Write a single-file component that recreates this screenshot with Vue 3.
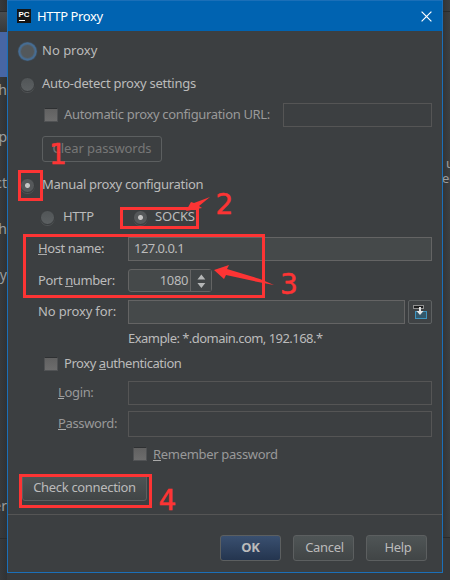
<script setup>
const marks = [
  { n: '1', x: 49, y: 163.5 },
  { n: '2', x: 215.5, y: 213.5 },
  { n: '3', x: 280, y: 293.5 },
  { n: '4', x: 158.5, y: 509.5 },
]
</script>

<template>
  <div class="screen">
    <div class="behind-left">
      <i class="strip"></i><i class="tool"></i><i class="selected"></i>
      <span class="b1">Ch</span><span class="b2">p</span><span class="b3">ct</span><span class="b4">h</span><span class="b5">Py</span><span class="b6">er</span>
      <i class="rule"></i>
    </div>
    <section class="dialog">
      <header class="title">
        <svg class="logo" width="14" height="14" viewBox="0 0 14 14">
          <rect width="14" height="14" fill="#151515" />
          <text x="1.500" y="7.500" font-size="8" font-weight="700" font-family="Liberation Sans, sans-serif" fill="#fff" textLength="11">PC</text>
          <rect x="2" y="11" width="6" height="1" fill="#fff" />
        </svg>
        <span class="t-title">HTTP Proxy</span>
        <svg class="close" width="11" height="11" viewBox="0 0 11 11"><path d="M.6.6 10.4 10.4M10.4.6.6 10.4" stroke="#fff" stroke-width="1.2" /></svg>
      </header>

      <div class="row r-none"><i class="radio focus"></i><span class="t-none">No proxy</span></div>
      <div class="row r-auto"><i class="radio"></i><span class="t-auto">Auto-detect proxy settings</span></div>
      <div class="row r-url"><i class="check"></i><span class="t-url">Automatic proxy configuration URL:</span><i class="field off"></i></div>
      <div class="row r-clear"><button class="btn ghost"><span class="t-clear">Clear passwords</span></button></div>
      <div class="row r-manual"><i class="radio on"></i><span class="t-manual">Manual proxy configuration</span></div>
      <div class="row r-types">
        <i class="radio"></i><span class="t-http">HTTP</span>
        <i class="radio on"></i><span class="t-socks">SOCKS</span>
      </div>
      <div class="row r-host"><label><span class="t-host"><u>H</u>ost name:</span></label><div class="field"><span class="t-ip">127.0.0.1</span></div></div>
      <div class="row r-port">
        <label><span class="t-port">Port <u>n</u>umber:</span></label>
        <div class="spinner">
          <span class="t-num">1080</span>
          <svg width="20" height="21" viewBox="0 0 20 21"><path d="M6.500 9.500 10.500 4.500 14.500 9.500ZM6.500 13 14.500 13 10.500 18Z" fill="#b4b6b7" /></svg>
        </div>
      </div>
      <div class="row r-for">
        <label><span class="t-for">No proxy for:</span></label><i class="field"></i>
        <button class="pick">
          <svg width="22" height="22" viewBox="0 0 22 22">
            <rect x="6.500" y="10.500" width="11" height="7" fill="#33586b" stroke="#3f94bf" />
            <rect x="4.500" y="4.500" width="10" height="3" fill="#1d1e1f" stroke="#8f8f8f" />
            <path d="M10 6h2v4h2.500L11 14 7.500 10H10Z" fill="#e4e4e4" />
          </svg>
        </button>
      </div>
      <div class="row r-example"><span class="t-example">Example: *.domain.com, 192.168.*</span></div>
      <div class="row r-auth"><i class="check"></i><span class="t-auth">Proxy <u>a</u>uthentication</span></div>
      <div class="row r-login dim"><label><span class="t-login"><u>L</u>ogin:</span></label><i class="field off"></i></div>
      <div class="row r-pass dim"><label><span class="t-pass"><u>P</u>assword:</span></label><i class="field off"></i></div>
      <div class="row r-remember dim"><i class="check"></i><span class="t-remember"><u>R</u>emember password</span></div>
      <div class="row r-test"><button class="btn"><span class="t-test">Check connection</span></button></div>

      <footer class="actions">
        <button class="btn primary"><span class="t-ok">OK</span></button>
        <button class="btn"><span class="t-cancel">Cancel</span></button>
        <button class="btn"><span class="t-help">Help</span></button>
      </footer>
    </section>
    <div class="behind-right"><span class="c1">u</span><span class="c2">ed</span></div>

    <svg class="notes" width="450" height="580" viewBox="0 0 450 580">
      <g fill="none" stroke="#fd3434" stroke-width="3">
        <rect x="19.500" y="171.500" width="22" height="28" />
        <rect x="121.500" y="208.500" width="76" height="19" />
        <rect x="24.500" y="235.500" width="239" height="61" />
        <rect x="20.500" y="475.500" width="130" height="31" />
      </g>
      <g fill="#fd3434">
        <path d="M210 197 199 206 202 208 186 211 191 202 194 203Z" />
        <path d="M274 285 258 282 226 275 224 279 214 270 229 265 227 269 260 279Z" />
        <text v-for="m in marks" :key="m.n" :x="m.x" :y="m.y">{{ m.n }}</text>
      </g>
    </svg>
  </div>
</template>

<style>
body { background: #36383a; overflow: hidden; }
</style>
<style scoped>
* { box-sizing: border-box; }
.screen {
  position: relative;
  display: flex;
  width: 450px;
  height: 580px;
  overflow: hidden;
  background: #37393b;
  color: #bbbbbb;
  font: 13px/18px "Noto Sans", sans-serif;
}
span { white-space: nowrap; display: inline-block; }
i { display: block; flex: none; }
u { text-decoration: none; box-shadow: 0 1px 0 #aaa; display: inline-block; height: 15px; line-height: 18px; }
.behind-left { position: relative; width: 7px; height: 580px; overflow: hidden; background: linear-gradient(90deg, #37393b, #303234); color: #9b9d9e; font-size: 14px; }
.behind-left span { position: absolute; right: 0; }
.strip { height: 12px; border-bottom: 1px solid #292b2c; }
.tool { height: 20px; background: linear-gradient(#4a4d4f, #36393a); }
.selected { height: 45px; background: #4766a5; }
.rule { height: 1px; margin-top: 461px; background: #292b2c; }
.b1 { top: 81px; } .b2 { top: 128px; } .b3 { top: 174px; } .b4 { top: 220px; } .b5 { top: 266px; } .b6 { top: 497px; }
.behind-right { position: relative; width: 7px; height: 538px; overflow: hidden; background: linear-gradient(#292b2c, #292b2c) 0 11px / 7px 1px no-repeat, linear-gradient(90deg, #323436, #3c3f41); border-bottom: 1px solid #292b2c; color: #9b9d9e; }
.behind-right span { position: absolute; left: 3px; }
.c1 { top: 154px; } .behind-right .c2 { top: 169px; left: -1px; }
.dialog { width: 436px; height: 573px; background: #3c3f41; border: 1px solid #1b6fb8; flex: none; }
.title { display: flex; align-items: center; height: 30px; background: #0063b1; color: #fff; padding: 0 9px; }
.logo { margin-right: 6px; }
.close { margin-left: auto; margin-right: 1px; }
.row { display: flex; align-items: center; }
.row > span, .row > label > span, .btn > span { padding-bottom: 2px; }
.row > label { display: flex; flex: none; }
.t-title { letter-spacing: -.4px; }
.t-auto { letter-spacing: -.27px; }
.t-url { letter-spacing: -.33px; }
.t-clear { letter-spacing: -.08px; }
.t-manual { letter-spacing: -.3px; }
.t-http { letter-spacing: -.4px; }
.t-socks { letter-spacing: -.2px; }
.t-host { letter-spacing: -.4px; }
.t-ip { letter-spacing: -.55px; }
.t-port { letter-spacing: -.4px; }
.t-num { letter-spacing: -.3px; }
.t-for { letter-spacing: -.15px; }
.t-example { letter-spacing: -.54px; }
.t-auth { letter-spacing: -.45px; }
.t-login { letter-spacing: -.35px; }
.t-pass { letter-spacing: -.35px; }
.t-remember { letter-spacing: -.31px; }
.t-test { letter-spacing: -.33px; }
.t-cancel { letter-spacing: -.3px; margin-left: 2px; }
.t-help { letter-spacing: -.35px; margin-left: 3px; }
.t-ok { letter-spacing: -.3px; }
.radio { width: 15px; height: 15px; border-radius: 50%; background: linear-gradient(#515557, #5c6062); border: 1px solid #3a3d3f; box-shadow: 0 1px 0 #505355; margin-right: 7px; }
.radio.focus { border-color: #50677c; background: #53585b; box-shadow: 0 0 0 1.5px #466d94, 0 0 1px 2px #43617f; }
.radio.on { background: radial-gradient(circle, #c4c4c4 0 2px, #55585a 3px); }
.check { width: 14px; height: 14px; background: linear-gradient(#616161, #6d6d6d); border: 1px solid #505254; border-top-color: #2e3032; margin-right: 6px; }
.field { flex: none; height: 24px; border: 1px solid #646464; background: #45494a; }
.field.off { border-color: #555; background: none; }
.dim { color: #999; }
.r-none { height: 40px; padding-left: 12px; }
.r-auto { height: 26px; padding-left: 12px; }
.r-url { height: 36px; padding-left: 36px; color: #999; }
.t-url { width: 219px; }
.r-url .field { width: 149px; }
.r-clear { height: 32px; padding-left: 34px; }
.r-manual { height: 40px; padding-left: 12px; }
.r-types { height: 24px; padding-left: 32px; }
.t-http { width: 70px; margin-left: 1px; }
.r-host, .r-port, .r-for { padding-left: 30px; }
.r-host { height: 40px; }
.r-host label, .r-port label, .r-for label { width: 90px; }
.r-host .field { width: 304px; padding: 1px 5px; }
.r-port { height: 24px; }
.spinner { display: flex; width: 84px; height: 23px; border: 1px solid #646464; border-radius: 3px; background: #45494a; margin-top: -1px; }
.spinner span { width: 62px; padding-right: 2px; text-align: right; line-height: 20px; }
.spinner svg { border-left: 1px solid #646464; width: 21px; background: #414547; }
.r-for { height: 38px; }
.r-for .field { width: 277px; }
.pick { width: 24px; height: 24px; padding: 0; border: 1px solid #5e6162; border-radius: 2px; background: #3f4244; margin-left: 3px; }
.pick svg { display: block; }
.r-example { height: 16px; padding-left: 120px; }
.r-auth { height: 34px; padding-left: 36px; }
.r-login, .r-pass { padding-left: 50px; }
.r-login label, .r-pass label { width: 70px; }
.r-login { height: 24px; }
.r-pass { height: 38px; }
.r-login .field, .r-pass .field { width: 304px; }
.r-pass .field { height: 26px; }
.r-remember { height: 22px; padding-left: 125px; }
.r-remember span { padding-bottom: 0; }
.r-test { height: 45px; padding-left: 14px; }
.btn { display: flex; align-items: center; justify-content: center; height: 26px; padding: 0; border: 1px solid #5c5f60; border-radius: 3px; background: linear-gradient(#4f5556, #414546); color: #bbb; font: inherit; }
.r-test .btn { width: 125px; height: 27px; }
.ghost { width: 120px; background: none; color: #777; }
.actions { display: flex; justify-content: flex-end; gap: 12px; margin-top: 4px; padding: 20px 15px 0; border-top: 1px solid #555; }
.actions .btn { width: 61px; }
.actions .primary { background: linear-gradient(#3a5070, #24354f); font-weight: 700; }
.notes { position: absolute; left: 0; top: 0; }
.notes text { font: 28px "DejaVu Sans", sans-serif; stroke: #fd3434; stroke-width: .5px; }
</style>
